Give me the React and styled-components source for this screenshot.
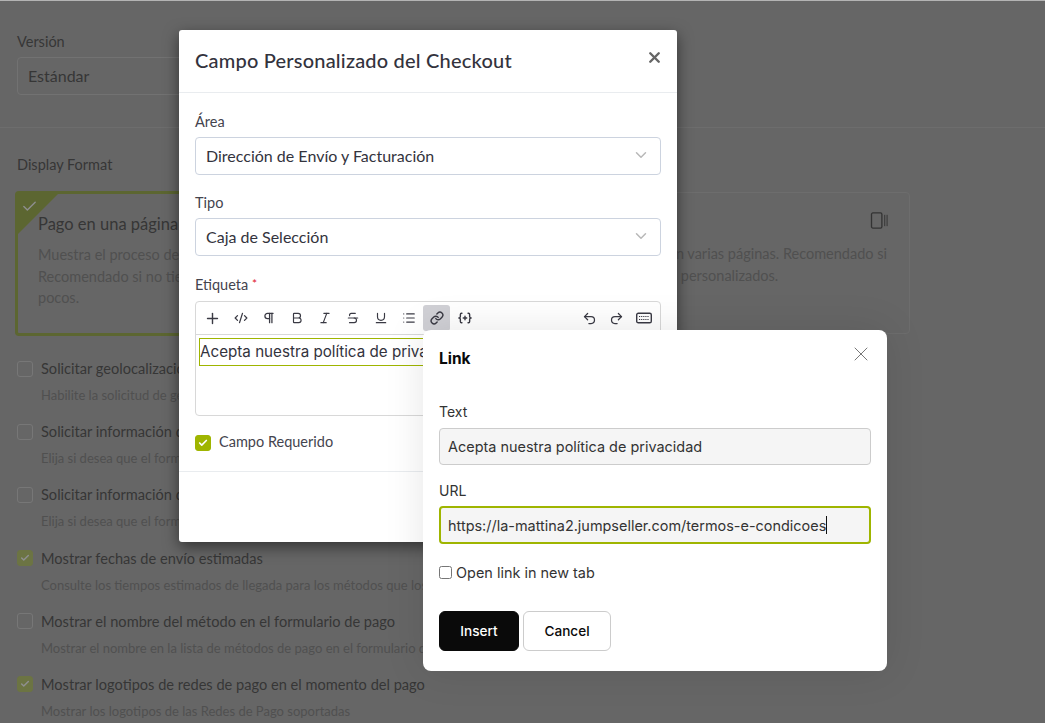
import React from 'react';
import styled, { createGlobalStyle } from 'styled-components';
import {
  Plus, CodeXml, Pilcrow, Bold, Italic, Strikethrough, Underline, List, Link as LinkIcon,
  Undo2, Redo2, Check, ChevronDown, X,
} from 'lucide-react';

const GlobalStyle = createGlobalStyle`
  html, body { margin: 0; padding: 0; height: 100%; background: #666; overflow: hidden; }
  body { font-family: Lato, "Liberation Sans", sans-serif; color: #333; }
  * { box-sizing: border-box; }
`;

// the page behind the dialogs is painted already dimmed, olive stays lighter than a black veil allows
const Page = styled.div`
  width: 1045px;
  height: 723px;
  overflow: hidden;
  position: relative;
  background: #666;
  border-top: 1px solid #b4b4b4;
`;

const TopSection = styled.section`
  padding: 32px 17px 0;
  border-bottom: 1px solid #6d6d6d;
  height: 127px;
`;

const Label = styled.div`
  font-size: 14.5px;
  line-height: 17px;
  color: #363636;
`;

const FakeSelect = styled.div`
  width: 300px;
  height: 38px;
  margin-top: 7px;
  padding: 0 10px 2px;
  display: flex;
  align-items: center;
  border: 1px solid #727272;
  border-radius: 4px;
  font-size: 16px;
  color: #363636;
`;

const FormatSection = styled.section`
  padding: 28px 17px 0 15px;
`;

const FormatLabel = styled(Label)`
  padding-left: 2px;
`;

const Cards = styled.div`
  display: flex;
  gap: 8px;
  margin-top: 18px;
  width: 895px;
`;

const Card = styled.div`
  position: relative;
  flex: 1;
  height: ${(p) => (p.$active ? '145px' : '142px')};
  margin-top: ${(p) => (p.$active ? '0' : '1px')};
  padding: ${(p) => (p.$active ? '19px 20px' : '19px 22px')};
  border: ${(p) => (p.$active ? '3px solid #5c6631' : '1px solid #6d6d6d')};
  border-radius: 4px;
`;

const Corner = styled.span`
  position: absolute;
  top: -1px;
  left: -1px;
  width: 0;
  height: 0;
  border-top: 42px solid #5c6631;
  border-right: 42px solid transparent;
`;

const CornerCheck = styled(Check)`
  position: absolute;
  top: 4px;
  left: 3px;
  color: #8e8e8e;
`;

const CardTitle = styled.div`
  font-size: 16.5px;
  line-height: 22px;
  color: #363636;
`;

const CardText = styled.p`
  margin: 9px 0 0;
  font-size: 14.5px;
  line-height: 21.5px;
  color: #505050;
  white-space: nowrap;
`;

const CardIcon = styled.svg`
  position: absolute;
  top: 19px;
  right: 19px;
  color: #333;
`;

const Options = styled.div`
  padding: 24px 17px 0;
`;

const Option = styled.div`
  height: 63.2px;
`;

const OptionRow = styled.div`
  display: flex;
  align-items: center;
  gap: 8px;
  height: 17px;
  font-size: 14.6px;
  color: #363636;
`;

const Box = styled.span`
  width: 16px;
  height: 16px;
  border-radius: 3px;
  display: inline-flex;
  align-items: center;
  justify-content: center;
  flex: none;
  border: 1px solid ${(p) => (p.$on ? '#6c7443' : '#777')};
  background: ${(p) => (p.$on ? '#6c7443' : 'transparent')};
  color: #8f8f8f;
`;

const OptionHelp = styled.div`
  margin: 10px 0 0 24px;
  font-size: 13px;
  line-height: 17px;
  color: #505050;
  white-space: nowrap;
`;

const FieldModal = styled.div`
  position: absolute;
  left: 179px;
  top: 29px;
  width: 498px;
  height: 512px;
  background: #fff;
  border-radius: 3px;
  box-shadow: 0 5px 15px rgba(0, 0, 0, 0.5);
`;

const ModalHeader = styled.header`
  height: 63px;
  padding: 0 16px 3px;
  display: flex;
  align-items: center;
  justify-content: space-between;
  border-bottom: 1px solid #e9ecef;
`;

const ModalTitle = styled.h4`
  margin: 0;
  font-size: 20px;
  font-weight: 500;
  letter-spacing: 0.2px;
  color: #33333d;
`;

const ModalClose = styled(X)`
  color: #666;
  margin: -5px -2px 0 0;
`;

const ModalBody = styled.div`
  padding: 20px 16px 0;
  border-bottom: 1px solid #e9ecef;
  height: 379px;
`;

const FieldLabel = styled.label`
  display: block;
  font-size: 14.5px;
  line-height: 18px;
  color: #44444e;
`;

const Required = styled.span`
  color: #e0142c;
  font-size: 12px;
  vertical-align: 2px;
`;

const Select = styled.div`
  height: 38px;
  margin: 6px 0 19px;
  padding: 0 10px 2px;
  display: flex;
  align-items: center;
  justify-content: space-between;
  border: 1px solid #ccd3df;
  border-radius: 4px;
  font-size: 16px;
  color: #33333d;
`;

const SelectArrow = styled(ChevronDown)`
  color: #b8b8b8;
`;

const Editor = styled.div`
  margin-top: 7px;
  height: 115px;
  border: 1px solid #d8d8d8;
  border-radius: 4px;
  display: flex;
  flex-direction: column;
`;

const Toolbar = styled.div`
  height: 33px;
  flex: none;
  padding: 3px;
  display: flex;
  align-items: center;
  gap: 1px;
  border-bottom: 1px solid #d8d8d8;
`;

const ToolButton = styled.button`
  width: 27px;
  height: 26px;
  padding: 0;
  border: 0;
  border-radius: 3px;
  display: flex;
  align-items: center;
  justify-content: center;
  color: #3a3a44;
  background: ${(p) => (p.$active ? '#d0d0d5' : 'transparent')};
`;

const ToolGap = styled.div`
  flex: 1;
`;

const HistoryTools = styled.div`
  display: flex;
`;

const EditorArea = styled.div`
  flex: 1;
  padding: 3px;
`;

const EditorText = styled.div`
  height: 28px;
  border: 1px solid #9fb500;
  font-family: Inter, sans-serif;
  font-size: 15.2px;
  line-height: 25px;
  color: #33333d;
  white-space: nowrap;
  overflow: hidden;
`;

const CheckRow = styled.div`
  display: flex;
  align-items: center;
  gap: 8px;
  margin-top: 18px;
  font-size: 14.5px;
  line-height: 16px;
  color: #44444e;
`;

const RequiredBox = styled(Box)`
  background: #9fb500;
  border-color: #9fb500;
  color: #fff;
`;

const RequiredText = styled.span`
  padding-bottom: 1px;
`;

const LinkDialog = styled.div`
  position: absolute;
  left: 423px;
  top: 329px;
  width: 464px;
  height: 341px;
  padding: 16px;
  background: #fff;
  border-radius: 8px;
  font-family: Inter, sans-serif;
  box-shadow: 0 0 40px rgba(0, 0, 0, 0.1);
`;

const DialogHead = styled.div`
  display: flex;
  justify-content: space-between;
  align-items: flex-start;
  height: 57px;
`;

const DialogTitle = styled.h3`
  margin: 4px 0 0;
  font-size: 15.5px;
  font-weight: 700;
  line-height: 18px;
  color: #0a0a0a;
`;

const DialogClose = styled(X)`
  color: #777;
  margin: -4px -2px 0 0;
`;

const DialogLabel = styled.label`
  display: block;
  font-size: 14px;
  line-height: 17px;
  color: #333;
`;

const DialogInput = styled.div`
  height: ${(p) => (p.$focus ? '38px' : '37px')};
  margin: ${(p) => (p.$focus ? '7px 0 0' : '8px 0 17px')};
  padding: 0 ${(p) => (p.$focus ? '7px' : '8px')};
  display: flex;
  align-items: center;
  background: #f5f5f5;
  border: ${(p) => (p.$focus ? '2px solid #9fb500' : '1px solid #ccc')};
  border-radius: 4px;
  font-size: 14.45px;
  color: #333;
`;

const Caret = styled.span`
  width: 1px;
  height: 18px;
  background: #111;
`;

const NewTabRow = styled.div`
  display: flex;
  align-items: center;
  gap: 4px;
  margin-top: 20px;
  font-size: 14.45px;
  line-height: 17px;
  color: #333;
`;

const NativeBox = styled.span`
  width: 13px;
  height: 13px;
  border: 1px solid #767676;
  border-radius: 2.5px;
`;

const Buttons = styled.div`
  display: flex;
  gap: 4px;
  margin-top: 30px;
`;

const DialogButton = styled.button`
  width: ${(p) => (p.$primary ? '80px' : '88px')};
  height: 40px;
  border-radius: 6px;
  font-family: Inter, sans-serif;
  font-size: 13.6px;
  font-weight: 500;
  background: ${(p) => (p.$primary ? '#0a0a0a' : '#fff')};
  color: ${(p) => (p.$primary ? '#fff' : '#0a0a0a')};
  border: 1px solid ${(p) => (p.$primary ? '#0a0a0a' : '#ccc')};
`;

const OPTIONS = [
  ['Solicitar geolocalización', 'Habilite la solicitud de geolocalización del cliente durante el pago', false],
  ['Solicitar información de la empresa', 'Elija si desea que el formulario solicite información de la empresa', false],
  ['Solicitar información de facturación', 'Elija si desea que el formulario solicite información de facturación', false],
  ['Mostrar fechas de envío estimadas', 'Consulte los tiempos estimados de llegada para los métodos que los soportan', true],
  ['Mostrar el nombre del método en el formulario de pago', 'Mostrar el nombre en la lista de métodos de pago en el formulario de pago', false],
  ['Mostrar logotipos de redes de pago en el momento del pago', 'Mostrar los logotipos de las Redes de Pago soportadas', true],
];

const BracesPlus = () => (
  <svg width="14" height="14" viewBox="0 0 16 16" fill="none" stroke="currentColor" strokeWidth="1.6" strokeLinecap="round">
    <path d="M4.5 2.5H4c-1 0-1.3.6-1.3 1.5v2.3c0 .8-.4 1.4-1.2 1.7.8.3 1.2.9 1.2 1.7V12c0 .9.3 1.5 1.3 1.5h.5" />
    <path d="M11.5 2.5h.5c1 0 1.3.6 1.3 1.5v2.3c0 .8.4 1.4 1.2 1.7-.8.3-1.2.9-1.2 1.7V12c0 .9-.3 1.5-1.3 1.5h-.5" />
    <path d="M8 6v4M6 8h4" />
  </svg>
);

const KeyboardGlyph = () => (
  <svg width="16" height="12" viewBox="0 0 16 12" fill="none" stroke="currentColor">
    <rect x="0.7" y="1.2" width="14.6" height="9.6" rx="1.6" strokeWidth="1.4" />
    <path d="M3 4.5h10M3 7.5h10" strokeWidth="1.2" strokeDasharray="1.2 0.9" />
  </svg>
);

function App() {
  return (
    <Page>
      <GlobalStyle />
      <TopSection>
        <Label>Versión</Label>
        <FakeSelect>Estándar</FakeSelect>
      </TopSection>
      <FormatSection>
        <FormatLabel>Display Format</FormatLabel>
        <Cards>
          <Card $active>
            <Corner />
            <CornerCheck size={17} strokeWidth={2} />
            <CardTitle>Pago en una página</CardTitle>
            <CardText>
              Muestra el proceso de pago en una sola página.<br />
              Recomendado si no tienes campos personalizados o son<br />
              pocos.
            </CardText>
          </Card>
          <Card>
            <CardIcon width="20" height="17" viewBox="0 0 20 18" fill="none" stroke="currentColor">
              <rect x="1" y="1" width="11" height="16" rx="1.5" strokeWidth="1.4" />
              <path d="M15 3v12M17.5 3v12" strokeWidth="1" />
            </CardIcon>
            <CardTitle>Pago en varias páginas</CardTitle>
            <CardText>
              Muestra el proceso de pago en varias páginas. Recomendado si<br />
              tienes varias etapas o campos personalizados.
            </CardText>
          </Card>
        </Cards>
      </FormatSection>
      <Options>
        {OPTIONS.map(([title, help, on]) => (
          <Option key={title}>
            <OptionRow>
              <Box $on={on}>{on && <Check size={10} strokeWidth={3.5} />}</Box>
              {title}
            </OptionRow>
            <OptionHelp>{help}</OptionHelp>
          </Option>
        ))}
      </Options>

      <FieldModal>
        <ModalHeader>
          <ModalTitle>Campo Personalizado del Checkout</ModalTitle>
          <ModalClose size={17} strokeWidth={3.4} />
        </ModalHeader>
        <ModalBody>
          <FieldLabel>Área</FieldLabel>
          <Select>
            Dirección de Envío y Facturación
            <SelectArrow size={18} />
          </Select>
          <FieldLabel>Tipo</FieldLabel>
          <Select>
            Caja de Selección
            <SelectArrow size={18} />
          </Select>
          <FieldLabel>Etiqueta <Required>*</Required></FieldLabel>
          <Editor>
            <Toolbar>
              <ToolButton><Plus size={17} /></ToolButton>
              <ToolButton><CodeXml size={14} strokeWidth={2.2} /></ToolButton>
              <ToolButton><Pilcrow size={14} strokeWidth={2.2} /></ToolButton>
              <ToolButton><Bold size={14} /></ToolButton>
              <ToolButton><Italic size={14} /></ToolButton>
              <ToolButton><Strikethrough size={14} /></ToolButton>
              <ToolButton><Underline size={14} /></ToolButton>
              <ToolButton><List size={14} /></ToolButton>
              <ToolButton $active><LinkIcon size={14} strokeWidth={2.4} /></ToolButton>
              <ToolButton><BracesPlus /></ToolButton>
              <ToolGap />
              <HistoryTools>
                <ToolButton><Undo2 size={15} /></ToolButton>
                <ToolButton><Redo2 size={15} /></ToolButton>
                <ToolButton><KeyboardGlyph /></ToolButton>
              </HistoryTools>
            </Toolbar>
            <EditorArea>
              <EditorText>Acepta nuestra política de privacidad</EditorText>
            </EditorArea>
          </Editor>
          <CheckRow>
            <RequiredBox><Check size={10} strokeWidth={4} /></RequiredBox>
            <RequiredText>Campo Requerido</RequiredText>
          </CheckRow>
        </ModalBody>
      </FieldModal>

      <LinkDialog>
        <DialogHead>
          <DialogTitle>Link</DialogTitle>
          <DialogClose size={24} strokeWidth={1} />
        </DialogHead>
        <DialogLabel>Text</DialogLabel>
        <DialogInput>Acepta nuestra política de privacidad</DialogInput>
        <DialogLabel>URL</DialogLabel>
        <DialogInput $focus>https://la-mattina2.jumpseller.com/termos-e-condicoes<Caret /></DialogInput>
        <NewTabRow>
          <NativeBox />
          Open link in new tab
        </NewTabRow>
        <Buttons>
          <DialogButton $primary>Insert</DialogButton>
          <DialogButton>Cancel</DialogButton>
        </Buttons>
      </LinkDialog>
    </Page>
  );
}

export default App;
